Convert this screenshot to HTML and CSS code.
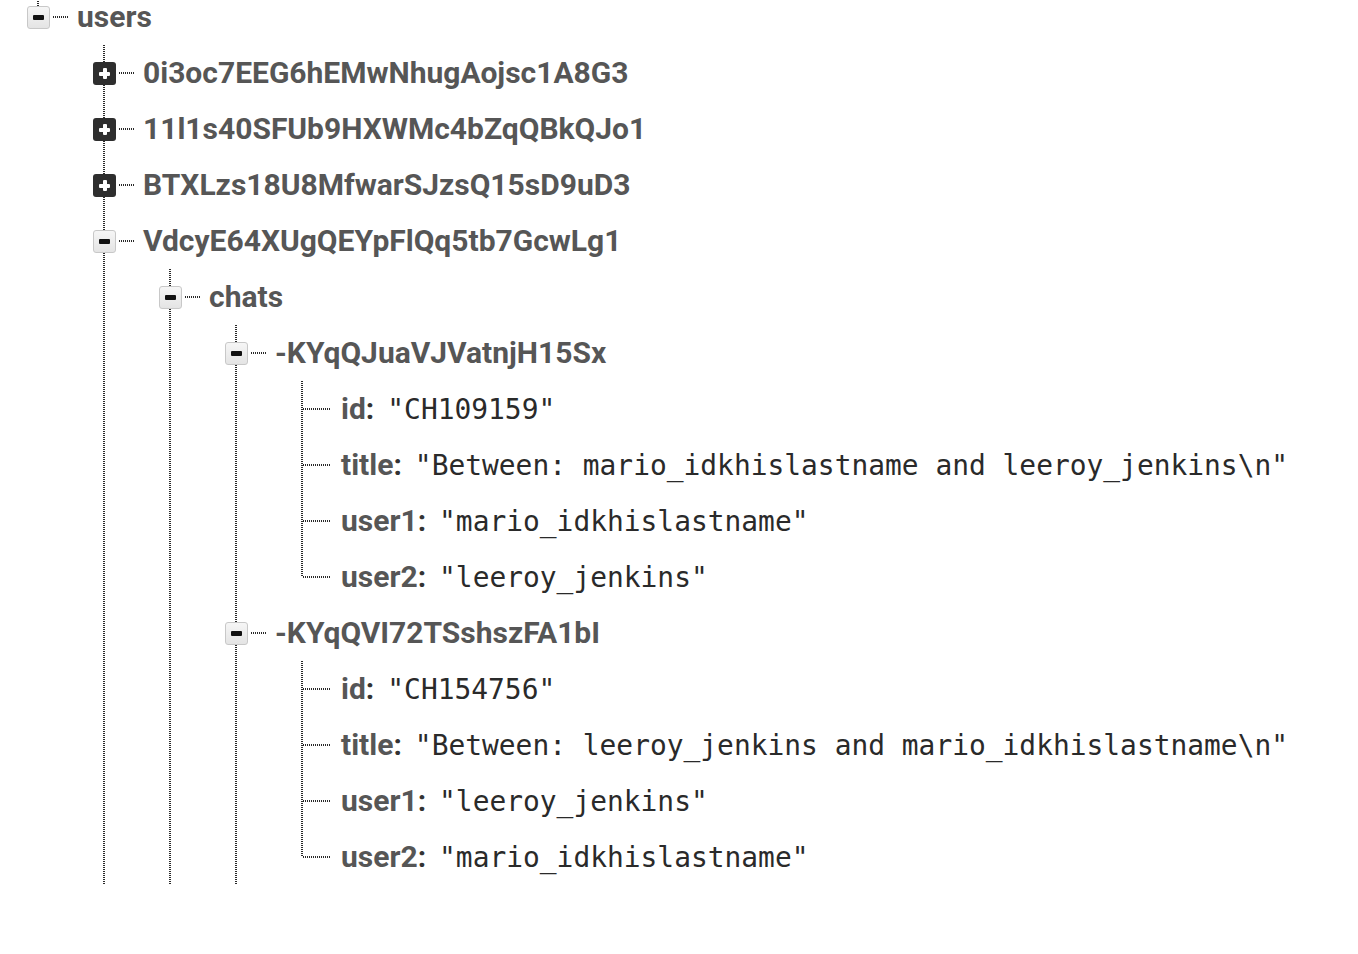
FILE: index.html
```html
<!DOCTYPE html>
<html lang="en">
<head>
<meta charset="utf-8">
<title>Database tree</title>
<link rel="stylesheet" href="styles.css">
</head>
<body>
<ul class="tree root">
  <li class="node last">
    <div class="row"><span class="toggle minus"></span><span class="conn"></span><span class="key">users</span></div>
    <ul class="tree">
      <li class="node">
        <div class="row"><span class="toggle plus"></span><span class="conn"></span><span class="key">0i3oc7EEG6hEMwNhugAojsc1A8G3</span></div>
      </li>
      <li class="node">
        <div class="row"><span class="toggle plus"></span><span class="conn"></span><span class="key">11l1s40SFUb9HXWMc4bZqQBkQJo1</span></div>
      </li>
      <li class="node">
        <div class="row"><span class="toggle plus"></span><span class="conn"></span><span class="key">BTXLzs18U8MfwarSJzsQ15sD9uD3</span></div>
      </li>
      <li class="node">
        <div class="row"><span class="toggle minus"></span><span class="conn"></span><span class="key">VdcyE64XUgQEYpFlQq5tb7GcwLg1</span></div>
        <ul class="tree">
          <li class="node">
            <div class="row"><span class="toggle minus"></span><span class="conn"></span><span class="key">chats</span></div>
            <ul class="tree">
              <li class="node">
                <div class="row"><span class="toggle minus"></span><span class="conn"></span><span class="key">-KYqQJuaVJVatnjH15Sx</span></div>
                <ul class="tree">
                  <li class="leaf"><div class="row"><span class="leaf-conn"></span><span class="text"><span class="key">id</span><span class="colon">:</span><span class="value">"CH109159"</span></span></div></li>
                  <li class="leaf"><div class="row"><span class="leaf-conn"></span><span class="text"><span class="key">title</span><span class="colon">:</span><span class="value">"Between: mario_idkhislastname and leeroy_jenkins\n"</span></span></div></li>
                  <li class="leaf"><div class="row"><span class="leaf-conn"></span><span class="text"><span class="key">user1</span><span class="colon">:</span><span class="value">"mario_idkhislastname"</span></span></div></li>
                  <li class="leaf last"><div class="row"><span class="leaf-conn"></span><span class="text"><span class="key">user2</span><span class="colon">:</span><span class="value">"leeroy_jenkins"</span></span></div></li>
                </ul>
              </li>
              <li class="node">
                <div class="row"><span class="toggle minus"></span><span class="conn"></span><span class="key">-KYqQVI72TSshszFA1bI</span></div>
                <ul class="tree">
                  <li class="leaf"><div class="row"><span class="leaf-conn"></span><span class="text"><span class="key">id</span><span class="colon">:</span><span class="value">"CH154756"</span></span></div></li>
                  <li class="leaf"><div class="row"><span class="leaf-conn"></span><span class="text"><span class="key">title</span><span class="colon">:</span><span class="value">"Between: leeroy_jenkins and mario_idkhislastname\n"</span></span></div></li>
                  <li class="leaf"><div class="row"><span class="leaf-conn"></span><span class="text"><span class="key">user1</span><span class="colon">:</span><span class="value">"leeroy_jenkins"</span></span></div></li>
                  <li class="leaf last"><div class="row"><span class="leaf-conn"></span><span class="text"><span class="key">user2</span><span class="colon">:</span><span class="value">"mario_idkhislastname"</span></span></div></li>
                </ul>
              </li>
            </ul>
          </li>
        </ul>
      </li>
    </ul>
  </li>
</ul>
</body>
</html>
```

FILE: styles.css
```css
html, body {
  margin: 0;
  padding: 0;
  background: #ffffff;
  overflow: hidden;
}

body {
  width: 1358px;
  height: 954px;
  font-family: Roboto, "Noto Sans", sans-serif;
}

.tree {
  list-style: none;
  margin: 0;
  padding: 0;
}

.tree.root {
  margin-top: -11px;
  margin-left: 27px;
}

.tree .tree {
  margin-left: 66px;
}

.node,
.leaf {
  position: relative;
}

/* vertical sibling line */
.node::before,
.leaf::before {
  content: "";
  position: absolute;
  left: 10px;
  top: 0;
  bottom: 0;
  width: 2px;
  background: repeating-linear-gradient(to bottom, #2a2a2a 0 1px, transparent 1px 2px);
}

.node.last::before,
.leaf.last::before {
  bottom: auto;
  height: 28px;
}

.row {
  position: relative;
  display: flex;
  align-items: center;
  height: 56px;
  white-space: nowrap;
}

.toggle {
  position: relative;
  flex: none;
  box-sizing: border-box;
  width: 23px;
  height: 23px;
  border-radius: 3px;
  z-index: 1;
}

.toggle.minus {
  background: linear-gradient(#f6f6f6, #e4e4e4);
  border: 1px solid #c8c8c8;
}

.toggle.minus::after {
  content: "";
  position: absolute;
  left: 5px;
  top: 8px;
  width: 11px;
  height: 5px;
  border-radius: 1px;
  background: #111;
}

.toggle.plus {
  background: #2e2e2e;
}

.toggle.plus::before,
.toggle.plus::after {
  content: "";
  position: absolute;
  background: #fff;
  border-radius: 1px;
}

.toggle.plus::before {
  left: 6px;
  top: 10px;
  width: 11px;
  height: 4px;
}

.toggle.plus::after {
  left: 10px;
  top: 6px;
  width: 4px;
  height: 11px;
}

.conn {
  flex: none;
  width: 15px;
  height: 2px;
  margin-left: 3px;
  margin-right: 9px;
  background: repeating-linear-gradient(to right, #2a2a2a 0 1px, transparent 1px 2px);
}

.leaf-conn {
  flex: none;
  width: 28px;
  height: 2px;
  margin-left: 12px;
  margin-right: 10px;
  background: repeating-linear-gradient(to right, #2a2a2a 0 1px, transparent 1px 2px);
}

.key {
  font-size: 30px;
  font-weight: 700;
  color: #565656;
}

.row > .key,
.text {
  margin-bottom: 2px;
}

.colon {
  font-size: 30px;
  font-weight: 700;
  color: #333;
  margin-right: 13px;
}

.value {
  font-family: "DejaVu Sans Mono", "Liberation Mono", monospace;
  font-size: 27.9px;
  color: #2a2a2a;
}
```
